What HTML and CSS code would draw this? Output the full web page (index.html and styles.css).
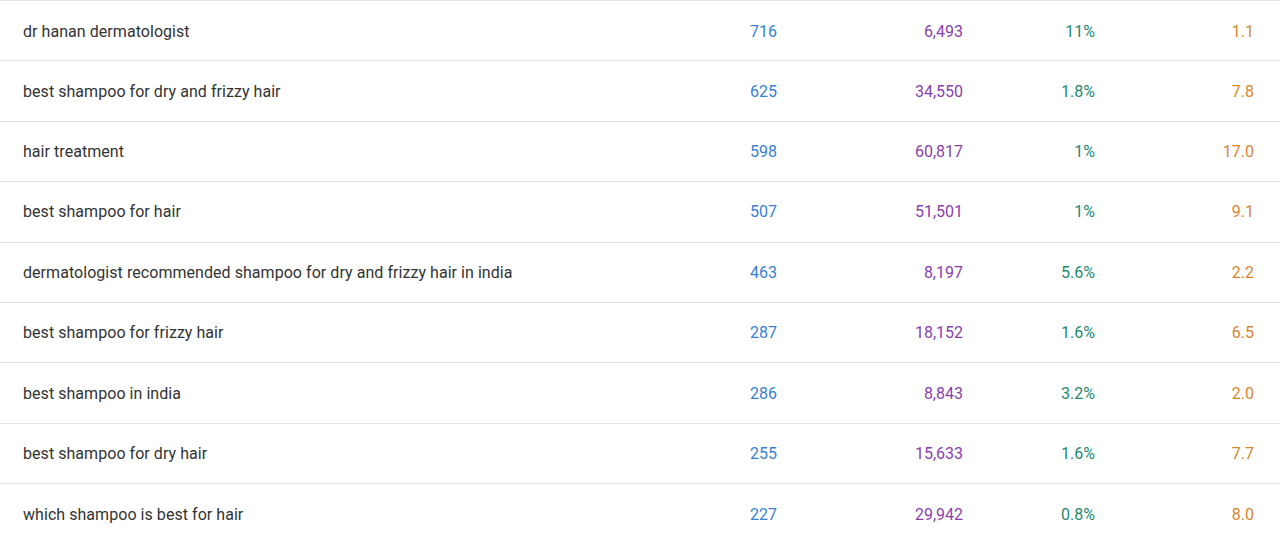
FILE: index.html
```html
<!DOCTYPE html>
<html lang="en">
<head>
  <meta charset="UTF-8">
  <title>Keywords</title>
  <link rel="stylesheet" href="styles.css">
</head>
<body>

  <div class="kw-table">
    <div class="row">
      <div class="kw">dr hanan dermatologist</div>
      <div class="pos">716</div>
      <div class="vol">6,493</div>
      <div class="share">11%</div>
      <div class="kd">1.1</div>
    </div>
    <div class="row">
      <div class="kw">best shampoo for dry and frizzy hair</div>
      <div class="pos">625</div>
      <div class="vol">34,550</div>
      <div class="share">1.8%</div>
      <div class="kd">7.8</div>
    </div>
    <div class="row">
      <div class="kw">hair treatment</div>
      <div class="pos">598</div>
      <div class="vol">60,817</div>
      <div class="share">1%</div>
      <div class="kd">17.0</div>
    </div>
    <div class="row">
      <div class="kw">best shampoo for hair</div>
      <div class="pos">507</div>
      <div class="vol">51,501</div>
      <div class="share">1%</div>
      <div class="kd">9.1</div>
    </div>
    <div class="row">
      <div class="kw">dermatologist recommended shampoo for dry and frizzy hair in india</div>
      <div class="pos">463</div>
      <div class="vol">8,197</div>
      <div class="share">5.6%</div>
      <div class="kd">2.2</div>
    </div>
    <div class="row">
      <div class="kw">best shampoo for frizzy hair</div>
      <div class="pos">287</div>
      <div class="vol">18,152</div>
      <div class="share">1.6%</div>
      <div class="kd">6.5</div>
    </div>
    <div class="row">
      <div class="kw">best shampoo in india</div>
      <div class="pos">286</div>
      <div class="vol">8,843</div>
      <div class="share">3.2%</div>
      <div class="kd">2.0</div>
    </div>
    <div class="row">
      <div class="kw">best shampoo for dry hair</div>
      <div class="pos">255</div>
      <div class="vol">15,633</div>
      <div class="share">1.6%</div>
      <div class="kd">7.7</div>
    </div>
    <div class="row last">
      <div class="kw">which shampoo is best for hair</div>
      <div class="pos">227</div>
      <div class="vol">29,942</div>
      <div class="share">0.8%</div>
      <div class="kd">8.0</div>
    </div>
  </div>

</body>
</html>
```

FILE: styles.css
```css
body {
  margin: 0;
  background: #fff;
  font-family: Roboto, "Liberation Sans", sans-serif;
  font-size: 16px;
  color: #333;
}

.kw-table {
  border-top: 1px solid #e3e3e3;
}

.row {
  display: grid;
  grid-template-columns: 1fr 100px 186px 132px 159px;
  align-items: center;
  box-sizing: border-box;
  height: 60.4px;
  border-bottom: 1px solid #e3e3e3;
}

.row:first-child {
  padding-top: 1px;
}

.row.last {
  border-bottom: none;
}

.row > div {
  padding-right: 26px;
  text-align: right;
}

.row .kw {
  padding-left: 23px;
  text-align: left;
  letter-spacing: 0.05px;
}

.pos {
  color: #3a7fd5;
}

.vol {
  color: #8a3fae;
}

.share {
  color: #1f8a6f;
}

.kd {
  color: #d98530;
}
```
